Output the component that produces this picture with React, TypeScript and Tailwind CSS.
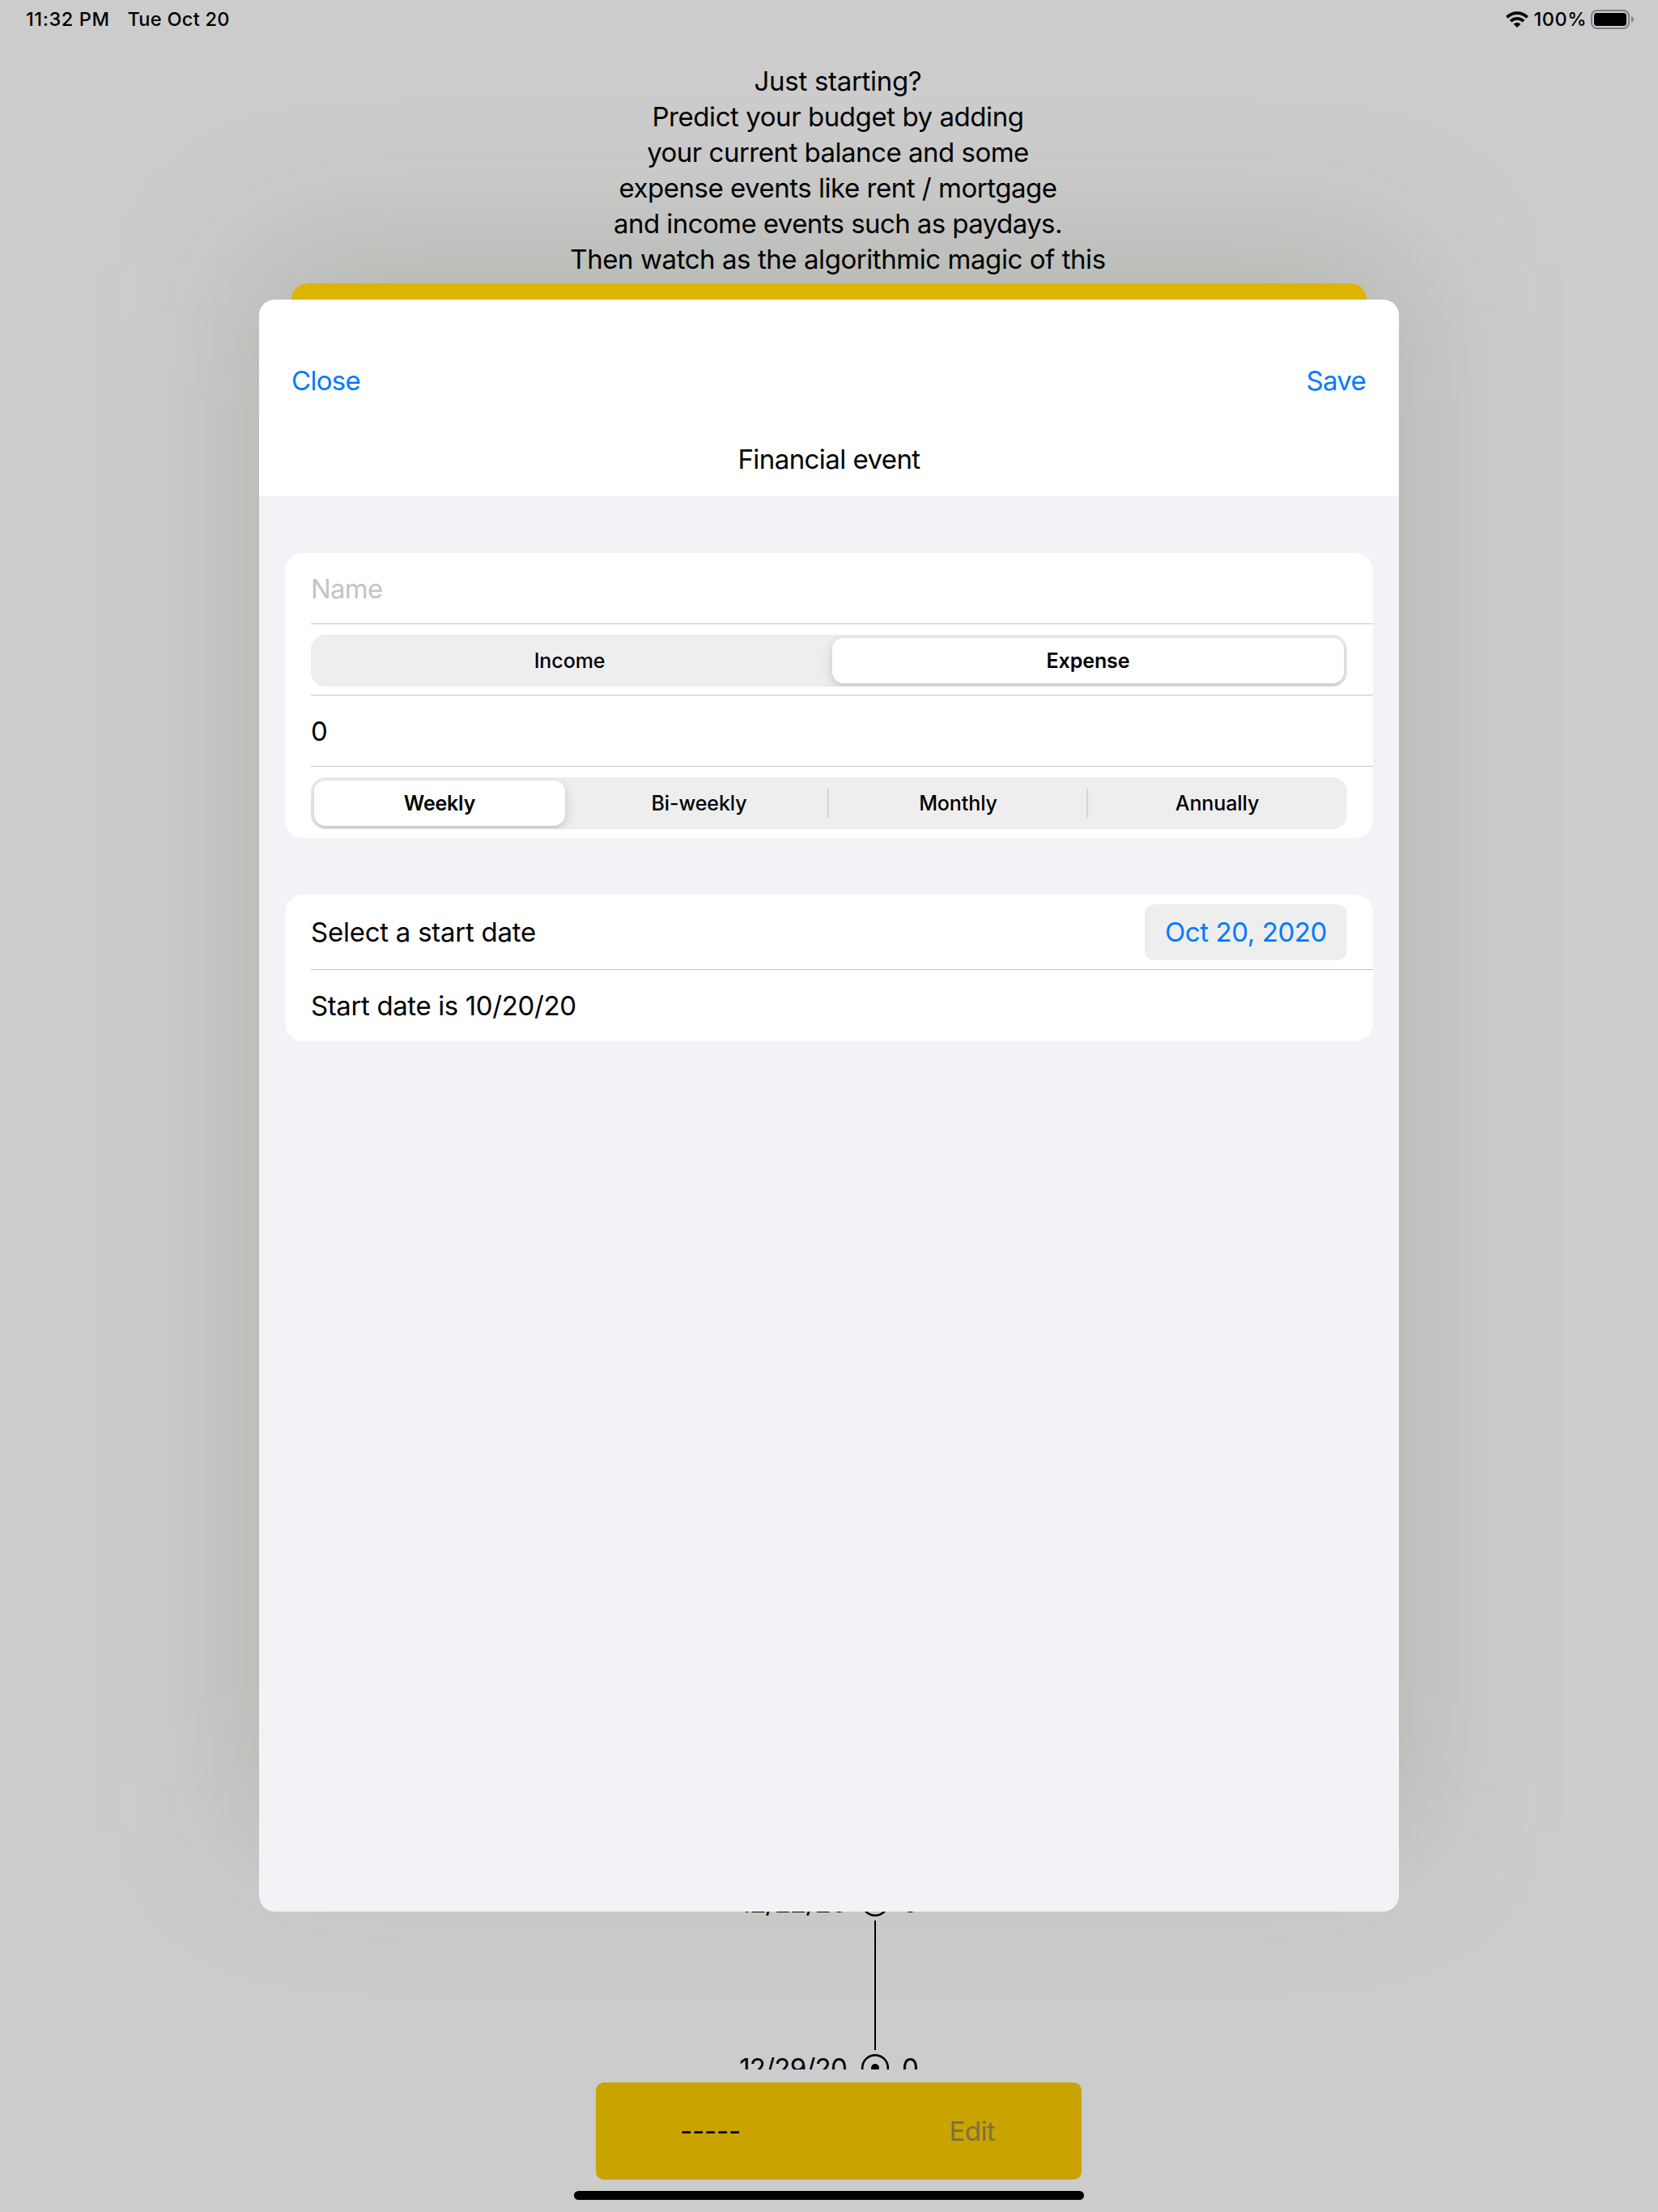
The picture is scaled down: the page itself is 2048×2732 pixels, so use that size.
import React from "react";

const introLines = [
  { text: "Just starting?", spacing: "tracking-[-0.3px]" },
  { text: "Predict your budget by adding", spacing: "tracking-[-0.44px]" },
  { text: "your current balance and some", spacing: "tracking-[-0.5px]" },
  { text: "expense events like rent / mortgage", spacing: "tracking-[-0.48px]" },
  { text: "and income events such as paydays.", spacing: "tracking-[-0.58px]" },
  { text: "Then watch as the algorithmic magic of this", spacing: "tracking-[-0.44px]" },
];

function WifiIcon() {
  return (
    <svg width="28" height="20" viewBox="0 0 28 20" className="block">
      <g fill="none" stroke="#000" strokeWidth="3.8">
        <path d="M1.4 7.3C8.5 0.3 19.5 0.3 26.6 7.3" />
        <path d="M6 12.2C10.5 7.8 17.5 7.8 22 12.2" />
      </g>
      <path d="M14 20L9.6 15.7C12.1 13.5 15.9 13.5 18.4 15.7Z" />
    </svg>
  );
}

function BatteryIcon() {
  return (
    <svg width="54" height="24" viewBox="0 0 54 24" className="block">
      <rect x="1" y="1" width="46" height="22" rx="6.5" fill="none" stroke="#7f7f7f" strokeWidth="2" />
      <rect x="4" y="4" width="40" height="16" rx="3.5" />
      <path d="M50 8C53.6 9.2 53.6 14.8 50 16Z" fill="#7f7f7f" />
    </svg>
  );
}

function TimelineRow({ date, value }: { date: string; value: string }) {
  return (
    <div className="flex h-[40px] w-[300px] items-center">
      <span className="flex w-[135px] justify-end whitespace-nowrap tracking-[-0.75px]">{date}</span>
      <svg width="36" height="36" viewBox="0 0 36 36" className="ml-[17px] block">
        <circle cx="18" cy="18" r="15.8" fill="none" stroke="#000" strokeWidth="2.6" />
        <circle cx="18" cy="18" r="5" />
      </svg>
      <span className="ml-[15px]">{value}</span>
    </div>
  );
}

function Segments({ labels, selected }: { labels: string[]; selected: number }) {
  return (
    <div className="flex h-[64px] overflow-hidden rounded-[18px] bg-[#eeeeef] text-[25px] font-medium tracking-[-0.1px]">
      {labels.map((label, i) => (
        <div key={label} className="flex flex-1 items-center">
          {i > selected + 1 && <div className="-ml-[2px] h-[36px] w-[2px] bg-[#d5d5d6]" />}
          <div
            className={
              i === selected
                ? i === 0
                  ? "ml-[4px] mr-[6px] flex h-[56px] flex-1 items-center justify-center rounded-[14px] bg-white font-semibold tracking-[-0.2px] shadow-[0_4px_14px_rgba(0,0,0,0.16),0_2px_2px_rgba(0,0,0,0.05)]"
                  : "mx-[4px] flex h-[56px] flex-1 items-center justify-center rounded-[14px] bg-white font-semibold tracking-[-0.1px] shadow-[0_4px_14px_rgba(0,0,0,0.16),0_2px_2px_rgba(0,0,0,0.05)]"
                : "flex flex-1 items-center justify-center pr-px"
            }
          >
            <span>{label}</span>
          </div>
        </div>
      ))}
    </div>
  );
}

export default function App() {
  return (
    <div className="relative isolate h-[2732px] w-[2048px] overflow-hidden bg-[#cccccc] font-['Inter',sans-serif] text-[33px] leading-[44px] text-black">
      {/* Soft shadow cast by the sheet */}
      <div className="absolute left-[320px] top-[326px] -z-10 h-[1938px] w-[1408px] rounded-[20px] bg-[rgba(68,86,49,0.22)] blur-[95px]" />

      <div className="flex h-[48px] items-center justify-between pl-[32px] pr-[29px] text-[23.5px] font-medium">
        <div className="flex gap-[22px]">
          <span className="tracking-[0.6px]">11:32 PM</span>
          <span className="tracking-[0.3px]">Tue Oct 20</span>
        </div>
        <div className="flex items-center">
          <WifiIcon />
          <span className="ml-[7px] mr-[5px] tracking-[0.5px]">100%</span>
          <BatteryIcon />
        </div>
      </div>

      <div className="mx-auto flex w-[662px] translate-x-[11px] flex-col items-center pt-[30px]">
        {introLines.map((line) => (
          <div key={line.text} className={`whitespace-nowrap ${line.spacing}`}>
            {line.text}
          </div>
        ))}
      </div>

      <div className="absolute left-[911px] top-[2330px] h-[226px] overflow-hidden">
        <TimelineRow date="12/22/20" value="0" />
        <div className="ml-[169px] mt-[2px] h-[160px] w-[2px] bg-black" />
        <div className="mt-[2px]">
          <TimelineRow date="12/29/20" value="0" />
        </div>
      </div>

      <div className="absolute left-[736px] top-[2572px] flex h-[120px] w-[600px] items-center rounded-[10px] bg-[#c9a300]">
        <span className="ml-[104px] whitespace-nowrap tracking-[-0.2px]">-----</span>
        <span className="ml-auto mr-[107px] tracking-[-0.6px] text-[#7b7042]">Edit</span>
      </div>

      <div className="absolute left-[360px] top-[350px] h-[60px] w-[1328px] rounded-t-[20px] bg-[#ddb400]" />

      <div className="absolute left-[320px] top-[370px] flex h-[1991px] w-[1408px] flex-col overflow-hidden rounded-[20px] bg-[#f2f2f7]">
        <div className="h-[243px] bg-white">
          <div className="flex justify-between pl-[40px] pr-[41px] pt-[78px] tracking-[-0.7px] text-[#007aff]">
            <span>Close</span>
            <span>Save</span>
          </div>
          <div className="mt-[53px] text-center tracking-[-0.57px]">Financial event</div>
        </div>

        <div className="flex flex-col gap-[70px] px-[32px] pt-[70px]">
          <div className="flex h-[352px] flex-col rounded-[22px] bg-white pl-[32px]">
            <div className="flex h-[88px] items-center border-b border-[#c6c6c8] tracking-[-0.8px] text-[#c4c4c6]">Name</div>
            <div className="h-[88px] border-b border-[#c6c6c8] pr-[32px] pt-[13px]">
              <Segments labels={["Income", "Expense"]} selected={1} />
            </div>
            <div className="flex h-[88px] items-center border-b border-[#c6c6c8]">0</div>
            <div className="h-[88px] pr-[32px] pt-[13px]">
              <Segments labels={["Weekly", "Bi-weekly", "Monthly", "Annually"]} selected={0} />
            </div>
          </div>

          <div className="flex h-[181px] flex-col rounded-[22px] bg-white pl-[32px]">
            <div className="flex h-[93px] items-center justify-between border-b border-[#c6c6c8] pr-[32px]">
              <span className="tracking-[-0.25px]">Select a start date</span>
              <div className="flex h-[69px] w-[250px] items-center justify-center rounded-[12px] bg-[#eeeeef] tracking-[-0.42px] text-[#007aff]">
                <span>Oct 20, 2020</span>
              </div>
            </div>
            <div className="flex h-[88px] items-center tracking-[-0.38px]">Start date is 10/20/20</div>
          </div>
        </div>
      </div>

      <div className="absolute left-[709px] top-[2706px] h-[11px] w-[630px] rounded-full bg-black" />
    </div>
  );
}
